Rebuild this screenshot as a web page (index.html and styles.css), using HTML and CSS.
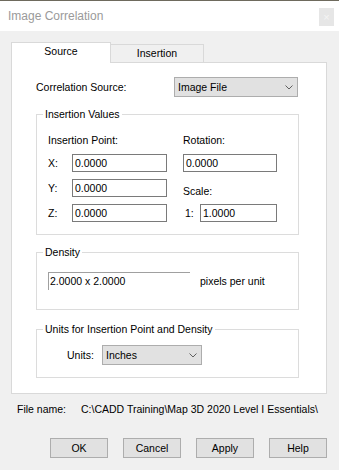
FILE: index.html
```html
<!DOCTYPE html>
<html lang="en">
<head>
    <meta charset="UTF-8">
    <meta name="viewport" content="width=device-width, initial-scale=1.0">
    <title>Image Correlation</title>
    <link rel="stylesheet" href="styles.css">
</head>
<body>
    <div class="window">
        <div class="titlebar">
            <span class="title">Image Correlation</span>
            <span class="close">&times;</span>
        </div>
        <div class="body">
            <div class="tabs">
                <div class="tab active">Source</div>
                <div class="tab inactive">Insertion</div>
                <div class="tab-fill"></div>
            </div>
            <div class="panel">
                <div class="source-row">
                    <span class="source-label">Correlation Source:</span>
                    <div class="combo combo-source">
                        <span>Image File</span>
                        <svg width="8" height="5" viewBox="0 0 8 5"><polyline points="0.5,0.5 4,4 7.5,0.5" fill="none" stroke="#606060" stroke-width="1"/></svg>
                    </div>
                </div>

                <fieldset class="group">
                    <legend>Insertion Values</legend>
                    <div class="values-grid">
                        <span class="head-left">Insertion Point:</span>
                        <span class="head-right">Rotation:</span>

                        <span class="axis">X:</span>
                        <div class="edit col-edit">0.0000</div>
                        <div class="edit col-right">0.0000</div>

                        <span class="axis">Y:</span>
                        <div class="edit col-edit">0.0000</div>
                        <span class="scale-label">Scale:</span>

                        <span class="axis">Z:</span>
                        <div class="edit col-edit">0.0000</div>
                        <span class="ratio">1:</span>
                        <div class="edit col-scale">1.0000</div>
                    </div>
                </fieldset>

                <fieldset class="group density">
                    <legend>Density</legend>
                    <div class="density-row">
                        <div class="static-edit">2.0000 x 2.0000</div>
                        <span class="unit-text">pixels per unit</span>
                    </div>
                </fieldset>

                <fieldset class="group units">
                    <legend>Units for Insertion Point and Density</legend>
                    <div class="units-row">
                        <span class="units-label">Units:</span>
                        <div class="combo combo-units">
                            <span>Inches</span>
                            <svg width="8" height="5" viewBox="0 0 8 5"><polyline points="0.5,0.5 4,4 7.5,0.5" fill="none" stroke="#606060" stroke-width="1"/></svg>
                        </div>
                    </div>
                </fieldset>
            </div>

            <div class="file-row">
                <span class="file-label">File name:</span>
                <span class="file-path">C:\CADD Training\Map 3D 2020 Level I Essentials\</span>
            </div>

            <div class="buttons">
                <button class="btn">OK</button>
                <button class="btn">Cancel</button>
                <button class="btn">Apply</button>
                <button class="btn">Help</button>
            </div>
        </div>
    </div>
</body>
</html>
```

FILE: styles.css
```css
* {
    box-sizing: border-box;
}

body {
    margin: 0;
    background-color: #f0f0f0;
    font-family: "Liberation Sans", Arial, sans-serif;
    font-size: 10.5px;
    line-height: 14px;
    color: #000;
}

.window {
    width: 339px;
    height: 470px;
    overflow: hidden;
}

.titlebar {
    height: 31px;
    border-top: 1px solid #6e6a5d;
    background-color: #fff;
    display: flex;
    justify-content: space-between;
    align-items: flex-start;
    padding: 0 5px 0 8px;
}

.title {
    font-size: 12px;
    line-height: 30px;
    color: #9a9a9a;
}

.close {
    width: 15px;
    height: 18px;
    margin-top: 7px;
    background-color: #e6e6e6;
    color: #f4f4f4;
    font-size: 11px;
    line-height: 18px;
    text-align: center;
}

.body {
    padding: 11px 12px 0 11px;
}

/* tabs */
.tabs {
    display: flex;
    align-items: flex-end;
    height: 21px;
}

.tab {
    text-align: center;
}

.tab.active {
    width: 100px;
    height: 21px;
    background-color: #fff;
    border: 1px solid #d9d9d9;
    border-bottom: none;
    line-height: 16px;
}

.tab.inactive {
    width: 93px;
    height: 19px;
    border: 1px solid #d9d9d9;
    border-left: none;
    line-height: 17px;
}

.tab-fill {
    flex: 1;
    border-bottom: 1px solid #d9d9d9;
}

.panel {
    height: 331px;
    background-color: #fff;
    border: 1px solid #d9d9d9;
    border-top: none;
    padding: 14px 27px 0 24px;
}

.source-row {
    display: flex;
    align-items: center;
    height: 20px;
}

.source-label {
    width: 138px;
}

.combo {
    height: 20px;
    background-color: #e1e1e1;
    border: 1px solid #adadad;
    display: flex;
    justify-content: space-between;
    align-items: center;
    padding: 0 4px 0 3px;
}

.combo-source {
    width: 124px;
}

.combo-units {
    width: 100px;
}

/* group boxes */
.group {
    margin: 10px 0 0;
    padding: 12px 11px 12px 11px;
    border: 1px solid #dcdcdc;
    min-width: 0;
}

.group legend {
    padding: 0 2px;
    margin-left: -5px;
    line-height: 14px;
}

.values-grid {
    display: grid;
    grid-template-columns: 24px 95px 16px 17px 77px;
    grid-template-rows: 14px 18px 18px 18px;
    row-gap: 7px;
    align-items: center;
}

.head-left {
    grid-column: 1 / 3;
}

.head-right {
    grid-column: 4 / 6;
}

.axis {
    grid-column: 1;
}

.col-edit {
    grid-column: 2;
}

.col-right {
    grid-column: 4 / 6;
}

.scale-label {
    grid-column: 4 / 6;
    align-self: end;
    margin-bottom: -1px;
}

.ratio {
    grid-column: 4;
    padding-left: 2px;
}

.col-scale {
    grid-column: 5;
}

.edit {
    height: 18px;
    border: 1px solid #7a7a7a;
    background-color: #fff;
    padding: 0 2px;
    line-height: 16px;
}

.density {
    padding-top: 13px;
    padding-bottom: 19px;
}

.density-row {
    display: flex;
    align-items: center;
    height: 18px;
}

.static-edit {
    width: 142px;
    height: 18px;
    border-top: 1px solid #a0a0a0;
    border-left: 1px solid #a0a0a0;
    padding-left: 1px;
    line-height: 17px;
}

.unit-text {
    margin-left: 10px;
}

.units {
    margin-top: 12px;
    padding-top: 9px;
}

.units-row {
    display: flex;
    align-items: center;
    height: 20px;
    padding-left: 19px;
}

.units-label {
    width: 35px;
}

/* bottom area */
.file-row {
    margin-top: 8px;
    padding-left: 6px;
    display: flex;
    white-space: nowrap;
}

.file-label {
    width: 64px;
    flex-shrink: 0;
}

.buttons {
    margin-top: 22px;
    display: flex;
    justify-content: flex-end;
    gap: 15px;
}

.btn {
    width: 58px;
    height: 20px;
    background-color: #e1e1e1;
    border: 1px solid #adadad;
    font-family: "Liberation Sans", Arial, sans-serif;
    font-size: 10.5px;
    line-height: 18px;
    color: #000;
    padding: 0;
}
```
